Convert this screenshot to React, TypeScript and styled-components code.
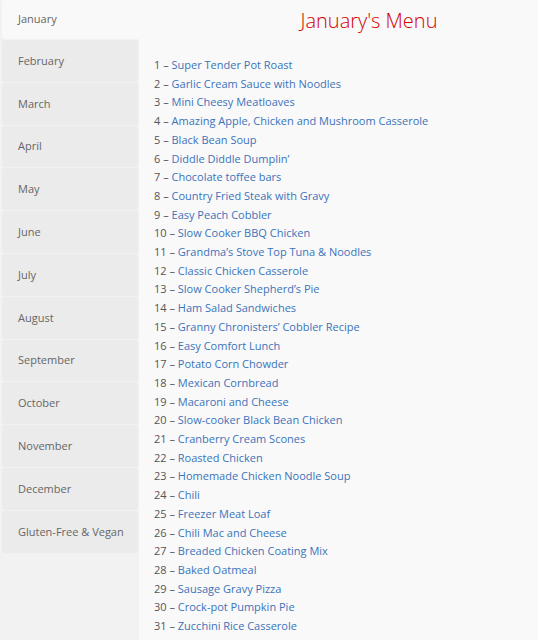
import React from "react";
import styled, { createGlobalStyle } from "styled-components";

const GlobalStyle = createGlobalStyle`
  html, body {
    margin: 0;
    padding: 0;
    background: #f9f9f9;
  }
  body {
    font-family: "Open Sans", "Liberation Sans", sans-serif;
  }
`;

const Page = styled.div`
  display: flex;
  width: 538px;
  min-height: 640px;
`;

const Sidebar = styled.div`
  width: 139px;
  flex-shrink: 0;
  background: #f2f2f2;
  display: flex;
  flex-direction: column;
  gap: 1px;
  padding-left: 2px;
  box-sizing: border-box;
`;

const Tab = styled.div<{ $active?: boolean }>`
  box-sizing: border-box;
  height: ${(p) => (p.$active ? "39px" : "41.8px")};
  margin-right: ${(p) => (p.$active ? "-1px" : "1px")};
  display: flex;
  align-items: center;
  padding-left: 16px;
  padding-bottom: ${(p) => (p.$active ? "3px" : "1px")};
  font-size: 11px;
  color: #666;
  background: ${(p) => (p.$active ? "#f9f9f9" : "#ebebeb")};
  border-radius: ${(p) => (p.$active ? "3px 0 0 3px" : "3px")};
`;

const Content = styled.div`
  flex: 1;
  background: #f9f9f9;
  padding: 7px 0 0 15px;
`;

const Title = styled.h2`
  margin: 0 0 22px;
  padding-left: 46px;
  text-align: center;
  font-size: 20px;
  font-weight: 300;
  line-height: 27px;
  color: #d40000;
`;

const List = styled.div`
  display: flex;
  flex-direction: column;
`;

const Item = styled.div`
  font-size: 11px;
  line-height: 18.7px;
  color: #555;
  white-space: nowrap;
`;

const Link = styled.a`
  color: #3b73b9;
  text-decoration: none;
`;

const months = [
  "January",
  "February",
  "March",
  "April",
  "May",
  "June",
  "July",
  "August",
  "September",
  "October",
  "November",
  "December",
  "Gluten-Free & Vegan",
];

const recipes = [
  "Super Tender Pot Roast",
  "Garlic Cream Sauce with Noodles",
  "Mini Cheesy Meatloaves",
  "Amazing Apple, Chicken and Mushroom Casserole",
  "Black Bean Soup",
  "Diddle Diddle Dumplin’",
  "Chocolate toffee bars",
  "Country Fried Steak with Gravy",
  "Easy Peach Cobbler",
  "Slow Cooker BBQ Chicken",
  "Grandma’s Stove Top Tuna & Noodles",
  "Classic Chicken Casserole",
  "Slow Cooker Shepherd’s Pie",
  "Ham Salad Sandwiches",
  "Granny Chronisters’ Cobbler Recipe",
  "Easy Comfort Lunch",
  "Potato Corn Chowder",
  "Mexican Cornbread",
  "Macaroni and Cheese",
  "Slow-cooker Black Bean Chicken",
  "Cranberry Cream Scones",
  "Roasted Chicken",
  "Homemade Chicken Noodle Soup",
  "Chili",
  "Freezer Meat Loaf",
  "Chili Mac and Cheese",
  "Breaded Chicken Coating Mix",
  "Baked Oatmeal",
  "Sausage Gravy Pizza",
  "Crock-pot Pumpkin Pie",
  "Zucchini Rice Casserole",
];

const App: React.FC = () => {
  return (
    <>
      <GlobalStyle />
      <Page>
        <Sidebar>
          {months.map((m, i) => (
            <Tab key={m} $active={i === 0}>
              {m}
            </Tab>
          ))}
        </Sidebar>
        <Content>
          <Title>January's Menu</Title>
          <List>
            {recipes.map((r, i) => (
              <Item key={r}>
                {i + 1} – <Link href="#">{r}</Link>
              </Item>
            ))}
          </List>
        </Content>
      </Page>
    </>
  );
};

export default App;
